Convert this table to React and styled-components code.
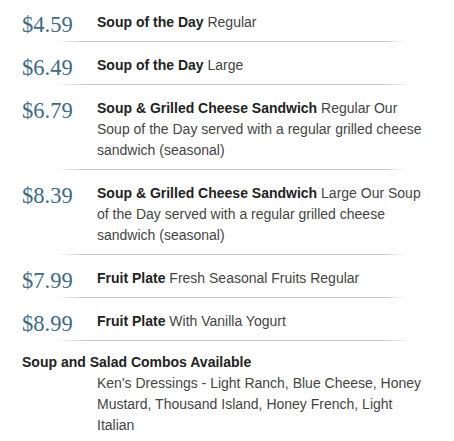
import React from "react";
import styled, { createGlobalStyle } from "styled-components";

const Global = createGlobalStyle`
  html, body { margin: 0; padding: 0; background: #fff; }
  body { font-family: "Liberation Sans", Arial, sans-serif; }
`;

const Menu = styled.div`
  width: 454px;
  margin-top: -1px;
  padding: 0 0 0 22px;
  box-sizing: border-box;
`;

const Item = styled.div`
  display: flex;
  align-items: flex-start;
  padding: 13px 0 8px;
`;

const Divider = styled.div`
  height: 1px;
  margin-left: 34px;
  width: 354px;
  background: linear-gradient(
    to right,
    rgba(200, 200, 200, 0) 0%,
    #c8c8c8 8%,
    #c8c8c8 92%,
    rgba(200, 200, 200, 0) 100%
  );
`;

const Price = styled.div`
  flex: 0 0 75px;
  font-family: "Liberation Serif", "Times New Roman", serif;
  font-size: 22.5px;
  line-height: 21px;
  margin: 2px 0 -2px;
  color: #3b6a86;
`;

const Desc = styled.div`
  width: 336px;
  font-size: 14px;
  line-height: 21px;
  color: #444;
`;

const Name = styled.b`
  color: #222;
  font-weight: bold;
`;

const Heading = styled.div`
  padding-top: 11px;
  font-size: 14px;
  line-height: 21px;
  font-weight: bold;
  color: #222;
`;

const Note = styled(Desc)`
  margin-left: 75px;
`;

const items = [
  { price: "$4.59", name: "Soup of the Day", text: "Regular" },
  { price: "$6.49", name: "Soup of the Day", text: "Large" },
  {
    price: "$6.79",
    name: "Soup & Grilled Cheese Sandwich",
    text: "Regular Our Soup of the Day served with a regular grilled cheese sandwich (seasonal)",
  },
  {
    price: "$8.39",
    name: "Soup & Grilled Cheese Sandwich",
    text: "Large Our Soup of the Day served with a regular grilled cheese sandwich (seasonal)",
  },
  { price: "$7.99", name: "Fruit Plate", text: "Fresh Seasonal Fruits Regular" },
  { price: "$8.99", name: "Fruit Plate", text: "With Vanilla Yogurt" },
];

export default function App() {
  return (
    <>
      <Global />
      <Menu>
        {items.map((it, i) => (
          <React.Fragment key={i}>
            <Item>
              <Price>{it.price}</Price>
              <Desc>
                <Name>{it.name}</Name> {it.text}
              </Desc>
            </Item>
            <Divider />
          </React.Fragment>
        ))}
        <Heading>Soup and Salad Combos Available</Heading>
        <Note>
          Ken's Dressings - Light Ranch, Blue Cheese, Honey Mustard, Thousand
          Island, Honey French, Light Italian
        </Note>
      </Menu>
    </>
  );
}
